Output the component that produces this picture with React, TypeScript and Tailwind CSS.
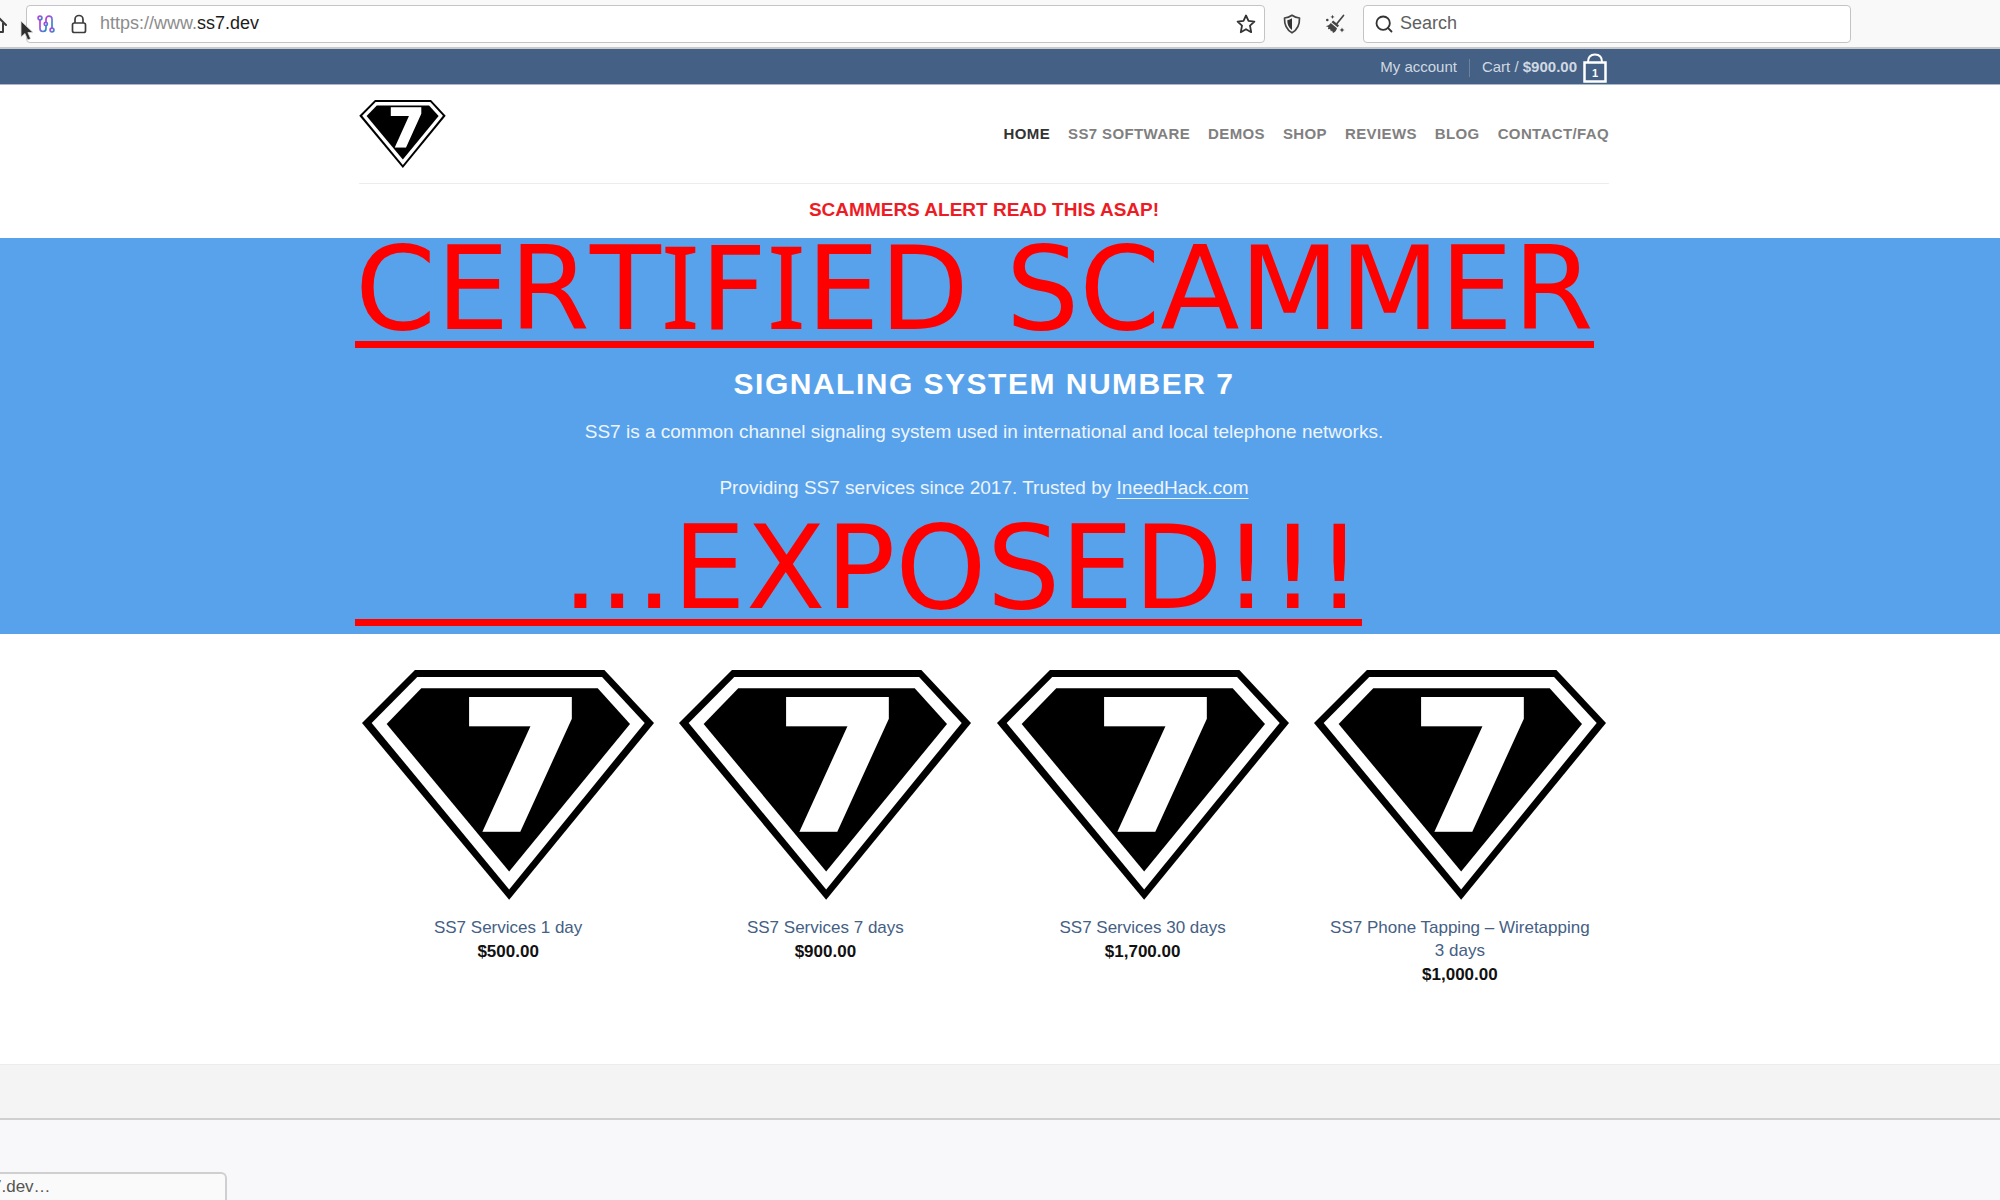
import { Search } from "lucide-react";

const navItems = ["Home", "SS7 Software", "Demos", "Shop", "Reviews", "Blog", "Contact/FAQ"];

const products = [
  { name: "SS7 Services 1 day", price: "$500.00" },
  { name: "SS7 Services 7 days", price: "$900.00" },
  { name: "SS7 Services 30 days", price: "$1,700.00" },
  { name: "SS7 Phone Tapping – Wiretapping 3 days", price: "$1,000.00" },
];

function Logo({ className }: { className: string }) {
  return (
    <svg viewBox="69 59 877 690" className={className} role="img" aria-label="SS7">
      <path d="M69 218 228 59H797L946 218 511 749Z" fill="#000" />
      <path d="M98 218 235 80H790L918 218 511 718Z" fill="#fff" />
      <path d="M143 221 247 114H777L874 221 511 664Z" fill="#000" />
      <text
        x="548"
        y="540"
        textAnchor="middle"
        fontSize="536"
        strokeWidth="14"
        className="fill-white stroke-white font-['DejaVu_Sans',sans-serif] font-bold"
      >
        7
      </text>
    </svg>
  );
}

function HomeIcon() {
  return (
    <svg viewBox="0 0 20 20" className="-ml-[13px] h-5 w-5 shrink-0" fill="none" stroke="#3c3c3c" strokeWidth="2">
      <path d="M1 11 10 2l9 9M4 9v9h12V9M8 18v-5h4v5" strokeLinejoin="round" strokeLinecap="round" />
    </svg>
  );
}

function RouteIcon() {
  return (
    <svg viewBox="0 0 18 18" className="h-[18px] w-[18px] shrink-0" fill="none" strokeWidth="1.7">
      <defs>
        <linearGradient id="route" x1="0" y1="0" x2="1" y2="1">
          <stop offset="0" stopColor="#c832d8" />
          <stop offset="0.5" stopColor="#7d6be0" />
          <stop offset="1" stopColor="#1c8fc0" />
        </linearGradient>
      </defs>
      <g stroke="url(#route)">
        <circle cx="3" cy="3" r="1.9" />
        <path d="M3 5v8.5a3 3 0 0 0 6 0v-3" />
        <circle cx="8.8" cy="9" r="1.6" />
        <path d="M9 7.3V4.2a3 3 0 0 1 6 0V13" />
        <circle cx="15" cy="15" r="1.9" />
      </g>
    </svg>
  );
}

function LockIcon() {
  return (
    <svg viewBox="0 0 16 20" className="h-5 w-4 shrink-0" fill="none" stroke="#3c3c3c" strokeWidth="1.7">
      <rect x="1.5" y="9" width="13" height="9.5" rx="1.8" />
      <path d="M4 9V5.5a4 4 0 0 1 8 0V9" />
    </svg>
  );
}

function StarIcon() {
  return (
    <svg viewBox="0 0 20 20" className="h-5 w-5" fill="none" stroke="#333" strokeWidth="1.8" strokeLinejoin="round">
      <path d="M10 1.5 12.5 6.9 18.4 7.6 14 11.7 15.2 18.2 10 15.2 4.8 18.2 6 11.7 1.6 7.6 7.5 6.9Z" />
    </svg>
  );
}

function ShieldIcon() {
  return (
    <svg viewBox="0 0 18 20" className="h-5 w-[18px]" fill="none" stroke="#444" strokeWidth="1.7" strokeLinejoin="round">
      <path d="M9 1.3C11 2.8 13.5 3.8 16.5 4c.2 6.5-1.5 11.5-7.5 14.8C3 15.5 1.3 10.5 1.5 4 4.5 3.8 7 2.8 9 1.3Z" />
      <path d="M9 4.3C7.5 5.3 6 5.9 4.3 6.2c0 4.3 1.2 7.3 4.7 9.7Z" fill="#333" stroke="none" />
    </svg>
  );
}

function BroomIcon() {
  return (
    <svg viewBox="0 0 20 20" className="h-5 w-5" fill="#444">
      <path d="M18.5 1.5 12 9.5" stroke="#444" strokeWidth="1.7" strokeLinecap="round" />
      <path d="M8.2 6.5 14 11.5 12.6 13.3 6.5 8.2Z" />
      <path d="M5.8 9 12 14.2C11.5 16.5 10 18.2 8 19L7 16.5 6 17.5 5 15 3 15.3 3.3 13 .8 12.3C2.8 11.8 4.5 10.8 5.8 9Z" />
      <path d="m7.5.8.6 1.5 1.5.6-1.5.6-.6 1.5-.6-1.5-1.5-.6 1.5-.6Z" />
      <path d="m17 13.5.8 1.7 1.7.8-1.7.8-.8 1.7-.8-1.7-1.7-.8 1.7-.8Z" />
      <circle cx="2.3" cy="6" r="1.3" />
    </svg>
  );
}

function Pointer() {
  return (
    <svg viewBox="0 0 14 22" className="absolute top-5 left-5 h-[22px] w-3.5">
      <path d="M1 1V17L5 13.5 7.7 20 10.6 18.7 7.9 12.5H13Z" fill="#2e2e2e" stroke="#ddd" strokeWidth="0.8" />
    </svg>
  );
}

function Toolbar() {
  return (
    <div className="relative flex h-[49px] items-center border-b-2 border-[#c9c9c9] bg-[#f9f9fa]">
      <a href="#" aria-label="Home" className="shrink-0">
        <HomeIcon />
      </a>
      <div className="ml-[19px] flex h-[38px] flex-1 items-center rounded border-1 border-[#c4c4c4] bg-white pr-2 pl-2.5">
        <RouteIcon />
        <span className="ml-4">
          <LockIcon />
        </span>
        <div className="ml-[13px] flex-1 text-[18px] text-[#8c8c8c]">
          https://www.<span className="text-[#1c1c1c]">ss7.dev</span>
        </div>
        <button type="button" aria-label="Bookmark this page">
          <StarIcon />
        </button>
      </div>
      <button type="button" aria-label="Protection" className="ml-[18px]">
        <ShieldIcon />
      </button>
      <button type="button" aria-label="Clean up" className="ml-6">
        <BroomIcon />
      </button>
      <label className="mr-[149px] ml-[18px] flex h-[38px] w-[488px] items-center gap-1.5 rounded border-1 border-[#c4c4c4] bg-white pl-2.5">
        <Search className="h-5 w-5 text-[#333]" strokeWidth={2.2} />
        <input
          type="search"
          aria-label="Search"
          placeholder="Search"
          className="min-w-0 flex-1 bg-transparent text-[18px] outline-none placeholder:text-[#5f5f5f]"
        />
      </label>
      <Pointer />
    </div>
  );
}

function TopBar() {
  return (
    <div className="border-b border-[#a9b8ca] bg-[#446084] pr-8">
      <div className="mx-auto flex h-[35px] max-w-[1250px] items-center justify-end pt-0.5 text-[15px] text-[#d0d8e2]">
        <a href="#">My account</a>
        <span className="mx-3 h-[18px] w-px bg-[#6b819d]" />
        <a href="#" className="flex items-center">
          <span className="mr-1.5">
            Cart / <strong>$900.00</strong>
          </span>
          <span className="relative mr-0.5 block">
            <svg viewBox="0 0 24 30" className="h-[30px] w-6" fill="none" stroke="#fff">
              <path d="M1.5 9.5H22.5V28.5H1.5Z" strokeWidth="2.5" />
              <path d="M5 9C5 4 8 1.5 12 1.5S19 4 19 9" strokeWidth="2" />
            </svg>
            <span className="absolute inset-x-0 bottom-0.5 text-center text-[11px] leading-4 font-bold text-white">1</span>
          </span>
        </a>
      </div>
    </div>
  );
}

function Header() {
  return (
    <header className="pr-8">
      <div className="mx-auto flex h-[99px] max-w-[1250px] items-center justify-between border-b border-[#ececec]">
        <a href="#">
          <Logo className="h-[68px] w-[87px]" />
        </a>
        <nav className="flex gap-[18px] text-[15px] font-bold tracking-wide text-[#808080] uppercase">
          {navItems.map((item, i) => (
            <a key={item} href="#" className={i === 0 ? "text-[#333]" : "hover:text-[#333]"}>
              {item}
            </a>
          ))}
        </nav>
      </div>
      <p className="h-[54px] pt-2.5 text-center text-[19px] leading-8 font-bold text-[#ed1c24]">
        <a href="#">SCAMMERS ALERT READ THIS ASAP!</a>
      </p>
    </header>
  );
}

// the capital I takes its serifs from Noto Sans
function SerifI() {
  return <span className="font-['Noto_Sans',sans-serif]">I</span>;
}

function Hero() {
  return (
    <section className="bg-[#58a2ec] pr-8 pb-2 text-white">
      <div className="mx-auto max-w-[1258px] font-['DejaVu_Sans',sans-serif] text-[116px] leading-[92px] text-[#f00] [font-kerning:none]">
        <span className="inline-block h-[110px] border-b-[7px] border-[#f00] whitespace-nowrap">
          CERT
          <SerifI />F<SerifI />
          ED SCAMMER
        </span>
      </div>
      <div className="flex flex-col items-center pt-4 text-center text-[19px] leading-8 text-[#eef5fd]">
        <h1 className="text-[30px] leading-10 font-bold tracking-wider text-white uppercase">Signaling System Number 7</h1>
        <p className="mt-3">SS7 is a common channel signaling system used in international and local telephone networks.</p>
        <p className="mt-6">
          Providing SS7 services since 2017. Trusted by{" "}
          <a href="#" className="underline underline-offset-4">
            IneedHack.com
          </a>
        </p>
      </div>
      <div className="mx-auto mt-3 max-w-[1258px] font-['DejaVu_Sans',sans-serif] text-[116px] leading-[104px] text-[#f00] [font-kerning:none]">
        <span className="inline-block h-[110px] border-b-[7px] border-[#f00] pl-[207px] whitespace-nowrap">...EXPOSED!!!</span>
      </div>
    </section>
  );
}

function Products() {
  return (
    <section className="pt-9 pr-8 pb-[77px]">
      <div className="mx-auto grid max-w-[1250px] grid-cols-4 gap-[19px]">
        {products.map((product) => (
          <a key={product.name} href="#" className="flex flex-col items-center text-center text-[17px]">
            <Logo className="w-[292px]" />
            <span className="mt-4 px-4 leading-[23px] text-[#446084]">{product.name}</span>
            <strong className="leading-[25px] text-[#111]">{product.price}</strong>
          </a>
        ))}
      </div>
    </section>
  );
}

export default function App() {
  return (
    <div className="flex min-h-screen flex-col overflow-hidden bg-white font-['Liberation_Sans',Arial,sans-serif]">
      <Toolbar />
      <TopBar />
      <Header />
      <Hero />
      <Products />
      <div className="h-14 border-t border-b-2 border-t-[#ececec] border-b-[#cfcfcf] bg-[#f4f4f4]" />
      <footer className="flex flex-1 flex-col items-start justify-end bg-[#f8f8fb]">
        <div className="h-7 w-[227px] overflow-hidden rounded-tr-md border-t-2 border-r-2 border-[#cfcfcf] bg-[#fafafa] text-[17px] leading-[26px] text-[#555]">
          <span className="-ml-2">7.dev…</span>
        </div>
      </footer>
    </div>
  );
}
